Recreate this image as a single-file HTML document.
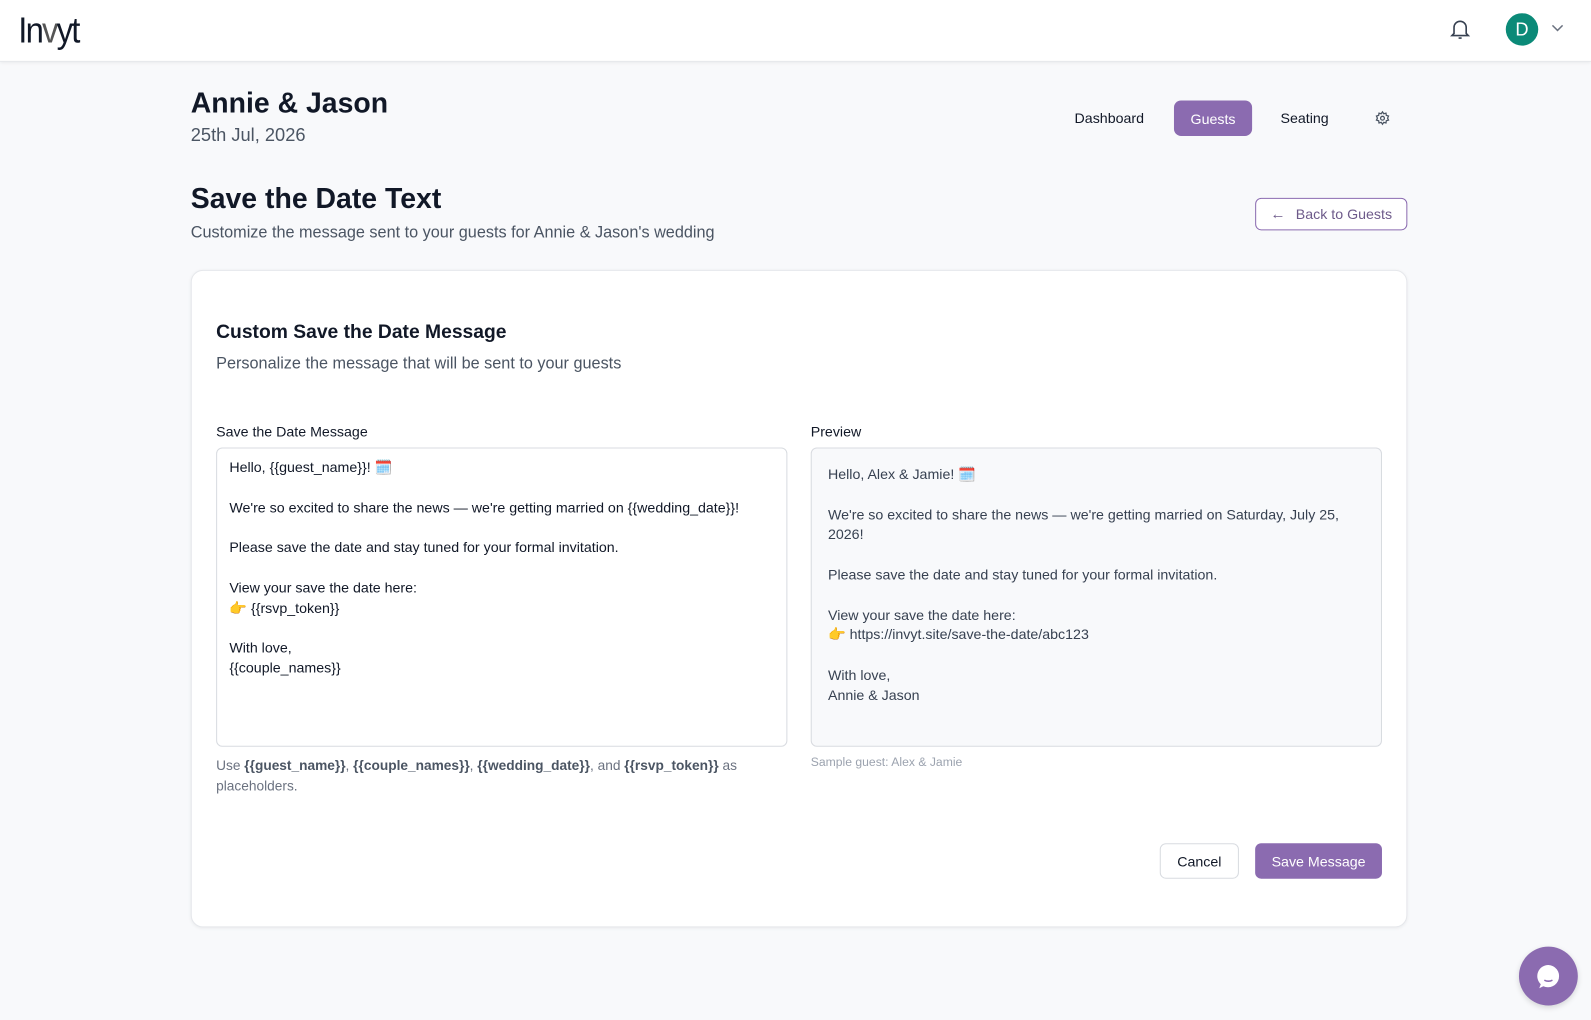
<!DOCTYPE html>
<html><head><meta charset="utf-8"><style>
*{box-sizing:border-box;margin:0;padding:0}
html,body{width:1591px;height:1020px;overflow:hidden;background:#f8f9fb}
#w{width:1568px;height:1006px;position:relative;transform:scale(1.01467);transform-origin:0 0;font-family:"Liberation Sans",Arial,sans-serif;color:#111827}
.hdr{position:absolute;left:0;top:0;width:1568px;height:61px;background:#fff;border-bottom:1px solid #e5e7eb;box-shadow:0 1px 3px rgba(0,0,0,.06)}
.abs{position:absolute}
.nav{font-size:14px;color:#111827;font-weight:500}
.pill{left:1157px;top:99px;width:77px;height:35px;background:#8b6bb0;color:#fff;border-radius:7px;font-size:14px;display:flex;align-items:center;justify-content:center}
.card{left:188px;top:266px;width:1199px;height:648px;background:#fff;border:1px solid #e5e7eb;border-radius:12px;box-shadow:0 1px 3px rgba(0,0,0,.06)}
.box{top:441px;width:563px;height:295px;border:1px solid #d8dbe0;border-radius:6px;font-size:14px;line-height:19.8px;padding:9px 12px}
.btn{height:35px;border-radius:6px;font-size:14px;display:flex;align-items:center;justify-content:center}
</style></head><body><div id="w">
<div class="hdr">
<div class="abs" style="left:18px;top:9px;font-family:'Liberation Sans',sans-serif;font-size:36px;color:#111827;letter-spacing:-2px;transform:scaleX(.9);transform-origin:0 0">In<span style="color:#555">v</span>yt</div>
<svg class="abs" style="left:1429px;top:18px" width="20" height="22" viewBox="0 0 20 22" fill="none" stroke="#374151" stroke-width="1.6"><path d="M4 15V9a6 6 0 0 1 12 0v6l2 2H2z"/><path d="M8.5 19.5h3"/></svg>
<div class="abs" style="left:1484px;top:13px;width:32px;height:32px;border-radius:50%;background:#0b8a78;color:#fff;font-size:18px;display:flex;align-items:center;justify-content:center">D</div>
<svg class="abs" style="left:1529px;top:24px" width="12" height="8" viewBox="0 0 12 8" fill="none" stroke="#6b7280" stroke-width="1.5"><path d="M1 1l5 5 5-5"/></svg>
</div>
<div class="abs" style="left:188px;top:86px;font-size:28px;font-weight:600">Annie &amp; Jason</div>
<div class="abs" style="left:188px;top:123px;font-size:18px;color:#4b5563">25th Jul, 2026</div>
<div class="abs nav" style="left:1059px;top:108px">Dashboard</div>
<div class="abs pill">Guests</div>
<div class="abs nav" style="left:1262px;top:108px">Seating</div>
<svg class="abs" style="left:1355px;top:109px" width="15" height="15" viewBox="0 0 24 24" fill="none" stroke="#4b5563" stroke-width="2"><circle cx="12" cy="12" r="3"/><path d="M12 2l2 3 3.5-1 .5 3.5 3.5 1-1.5 3.5 1.5 3-3.5 1-.5 3.5-3.5-1-2 3-2-3-3.5 1-.5-3.5-3.5-1 1.5-3-1.5-3.5 3.5-1L6.5 4 10 5z"/></svg>
<div class="abs" style="left:188px;top:180px;font-size:28px;font-weight:700">Save the Date Text</div>
<div class="abs" style="left:188px;top:221px;font-size:16px;color:#4b5563">Customize the message sent to your guests for Annie &amp; Jason's wedding</div>
<div class="abs btn" style="left:1237px;top:195px;width:150px;height:32px;border:1px solid #8b6bb0;color:#6d5a8a;background:#fff;gap:10px"><span style="font-size:15px">←</span> Back to Guests</div>
<div class="abs card"></div>
<div class="abs" style="left:213px;top:317px;font-size:19px;font-weight:600">Custom Save the Date Message</div>
<div class="abs" style="left:213px;top:350px;font-size:16px;color:#4b5563">Personalize the message that will be sent to your guests</div>
<div class="abs" style="left:213px;top:417px;font-size:14px;font-weight:500">Save the Date Message</div>
<div class="abs" style="left:799px;top:417px;font-size:14px;font-weight:500">Preview</div>
<div class="abs box" style="left:213px;background:#fff;color:#111827">Hello, {{guest_name}}! 🗓️<br><br>We're so excited to share the news — we're getting married on {{wedding_date}}!<br><br>Please save the date and stay tuned for your formal invitation.<br><br>View your save the date here:<br>👉 {{rsvp_token}}<br><br>With love,<br>{{couple_names}}</div>
<div class="abs box" style="left:799px;background:#f8f9fb;color:#374151;padding:16px 16px">Hello, Alex &amp; Jamie! 🗓️<br><br>We're so excited to share the news — we're getting married on Saturday, July 25, 2026!<br><br>Please save the date and stay tuned for your formal invitation.<br><br>View your save the date here:<br>👉 https://invyt.site/save-the-date/abc123<br><br>With love,<br>Annie &amp; Jason</div>
<div class="abs" style="left:213px;top:745px;width:560px;font-size:13.5px;line-height:20px;color:#6b7280">Use <b style="color:#4b5563">{{guest_name}}</b>, <b style="color:#4b5563">{{couple_names}}</b>, <b style="color:#4b5563">{{wedding_date}}</b>, and <b style="color:#4b5563">{{rsvp_token}}</b> as placeholders.</div>
<div class="abs" style="left:799px;top:744px;font-size:12px;color:#9ca3af">Sample guest: Alex &amp; Jamie</div>
<div class="abs btn" style="left:1143px;top:831px;width:78px;border:1px solid #d8dbe0;background:#fff;color:#111827">Cancel</div>
<div class="abs btn" style="left:1237px;top:831px;width:125px;background:#8b6bb0;color:#fff">Save Message</div>
<div class="abs" style="left:1497px;top:933px;width:58px;height:58px;border-radius:50%;background:#8b6bb0;box-shadow:0 2px 6px rgba(0,0,0,.15)"></div>
<svg class="abs" style="left:1510px;top:946px" width="32" height="32" viewBox="0 0 32 32"><path d="M16 5a11 11 0 1 1-5 21l-4 2 1.5-4A11 11 0 0 1 16 5z" fill="#fff"/><path d="M12 20q4 2 8 0" stroke="#8b6bb0" stroke-width="1.5" fill="none"/></svg>
</div></body></html>
